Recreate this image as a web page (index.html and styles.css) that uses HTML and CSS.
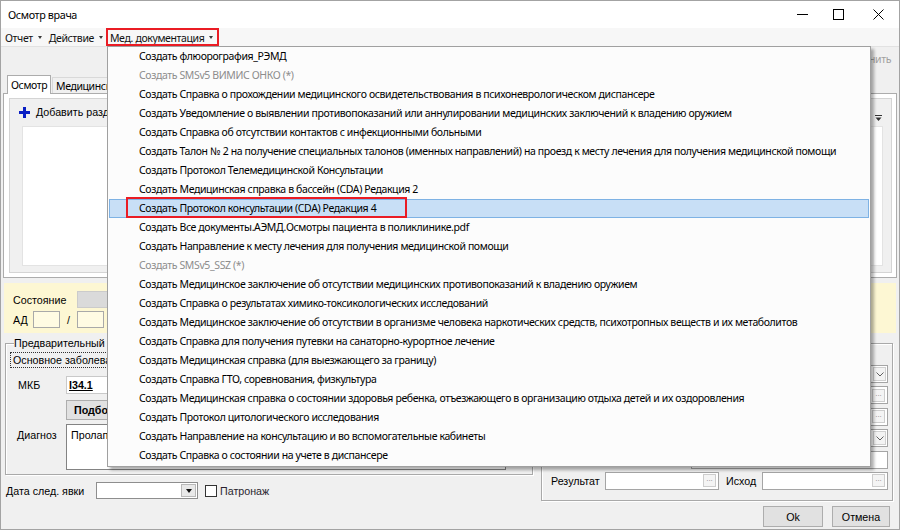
FILE: index.html
```html
<!DOCTYPE html>
<html lang="ru">
<head>
    <meta charset="UTF-8">
    <title>Осмотр врача</title>
    <link rel="stylesheet" href="styles.css">
</head>
<body>
<div class="window">
    <!-- Title bar -->
    <div class="titlebar ui">
        <span class="title">Осмотр врача</span>
        <div class="caption-buttons">
            <span class="cap-btn cap-min"><svg width="11" height="11" viewBox="0 0 11 11"><path d="M0 5.5h11" stroke="#000"/></svg></span>
            <span class="cap-btn cap-max"><svg width="11" height="11" viewBox="0 0 11 11"><rect x="0.5" y="0.5" width="10" height="10" fill="none" stroke="#000"/></svg></span>
            <span class="cap-btn cap-close"><svg width="11" height="11" viewBox="0 0 11 11"><path d="M0.5 0.5l10 10M10.5 0.5l-10 10" stroke="#000"/></svg></span>
        </div>
    </div>

    <!-- Menu bar -->
    <div class="menubar ui">
        <span class="menu-item">Отчет<i class="caret"></i></span>
        <span class="menu-item">Действие<i class="caret"></i></span>
        <span class="menu-item active">Мед. документация<i class="caret"></i></span>
    </div>

    <!-- Tool strip -->
    <div class="toolbar ui">
        <span class="tool-btn disabled">Сохранить</span>
    </div>

    <!-- Tabs -->
    <div class="tabs ui">
        <span class="tab active">Осмотр</span>
        <span class="tab">Медицинские</span>
    </div>
    <div class="tabpanel">
        <div class="page">
            <div class="page-toolbar">
                <span class="add-btn">
                    <svg width="11" height="11" viewBox="0 0 11 11"><path d="M4 0h3v4h4v3H7v4H4V7H0V4h4z" fill="#0a1fc4"/></svg>
                    Добавить раздел
                </span>
                <span class="overflow-btn"><svg width="7" height="8" viewBox="0 0 7 8"><path d="M0 1.5h7" stroke="#333"/><path d="M0.5 3.5h6l-3 3.5z" fill="#333"/></svg></span>
            </div>
            <div class="list">
                <div class="list-body"></div>
                <div class="vscroll">
                    <svg width="9" height="5" viewBox="0 0 9 5"><path d="M0.5 4.5l4-4 4 4" fill="none" stroke="#a6a6a6"/></svg>
                    <svg width="9" height="5" viewBox="0 0 9 5"><path d="M0.5 0.5l4 4 4-4" fill="none" stroke="#a6a6a6"/></svg>
                </div>
            </div>
        </div>
    </div>

    <!-- Patient state -->
    <div class="state-panel">
        <div class="state-row">
            <span class="state-label">Состояние</span>
            <span class="state-box"></span>
        </div>
        <div class="state-row">
            <span class="state-label short">АД</span>
            <span class="ad-input"></span>
            <span class="slash">/</span>
            <span class="ad-input"></span>
        </div>
    </div>

    <div class="lower">
        <div class="left-col">
            <div class="group diag">
                <div class="group-title">Предварительный диагноз</div>
                <div class="subtabs">
                    <span class="subtab">Основное заболевание</span>
                </div>
                <div class="form-row mkb-row">
                    <span class="form-label">МКБ</span>
                    <span class="input mkb"><u>I34.1</u></span>
                </div>
                <div class="form-row">
                    <span class="form-label"></span>
                    <span class="btn pick">Подбор</span>
                </div>
                <div class="form-row diag-row">
                    <span class="form-label">Диагноз</span>
                    <div class="textarea">Пролапс</div>
                </div>
            </div>
            <div class="date-row">
                <span class="date-label">Дата след. явки</span>
                <span class="combo date-combo"><span class="drop-btn"><i class="tri"></i></span></span>
                <span class="checkbox"></span>
                <span class="check-label">Патронаж</span>
            </div>
        </div>

        <div class="right-col">
            <div class="group extra">
                <div class="field-row">
                    <span class="field-label"></span>
                    <span class="input combo-box"><span class="chev-btn"><svg width="8" height="5" viewBox="0 0 8 5"><path d="M0.5 0.5l3.5 3.5 3.5-3.5" fill="none" stroke="#606060"/></svg></span></span>
                </div>
                <div class="field-row">
                    <span class="field-label"></span>
                    <span class="input"><span class="dots">...</span></span>
                </div>
                <div class="field-row">
                    <span class="field-label"></span>
                    <span class="input"><span class="dots">...</span></span>
                </div>
                <div class="field-row">
                    <span class="field-label"></span>
                    <span class="input combo-box"><span class="chev-btn"><svg width="8" height="5" viewBox="0 0 8 5"><path d="M0.5 0.5l3.5 3.5 3.5-3.5" fill="none" stroke="#606060"/></svg></span></span>
                </div>
                <div class="field-row">
                    <span class="field-label"></span>
                    <span class="input"></span>
                </div>
                <div class="field-row">
                    <span class="field-label result">Результат</span>
                    <span class="input result-input"><span class="dots">...</span></span>
                    <span class="field-label outcome">Исход</span>
                    <span class="input"><span class="dots">...</span></span>
                </div>
            </div>
        </div>
    </div>

    <div class="buttons">
        <span class="btn ok">Ok</span>
        <span class="btn cancel">Отмена</span>
    </div>

    <!-- Opened drop-down of "Мед. документация" -->
    <div class="dropdown ui">
        <div class="dd-item">Создать флюорография_РЭМД</div>
        <div class="dd-item disabled">Создать SMSv5 ВИМИС ОНКО (*)</div>
        <div class="dd-item">Создать Справка о прохождении медицинского освидетельствования в психоневрологическом диспансере</div>
        <div class="dd-item">Создать Уведомление о выявлении противопоказаний или аннулировании медицинских заключений к владению оружием</div>
        <div class="dd-item">Создать Справка об отсутствии контактов с инфекционными больными</div>
        <div class="dd-item">Создать Талон № 2 на получение специальных талонов (именных направлений) на проезд к месту лечения для получения медицинской помощи</div>
        <div class="dd-item">Создать Протокол Телемедицинской Консультации</div>
        <div class="dd-item">Создать Медицинская справка в бассейн (CDA) Редакция 2</div>
        <div class="dd-item selected">Создать Протокол консультации (CDA) Редакция 4<span class="mark"></span></div>
        <div class="dd-item">Создать Все документы.АЭМД.Осмотры пациента в поликлинике.pdf</div>
        <div class="dd-item">Создать Направление к месту лечения для получения медицинской помощи</div>
        <div class="dd-item disabled">Создать SMSv5_SSZ (*)</div>
        <div class="dd-item">Создать Медицинское заключение об отсутствии медицинских противопоказаний к владению оружием</div>
        <div class="dd-item">Создать Справка о результатах химико-токсикологических исследований</div>
        <div class="dd-item">Создать Медицинское заключение об отсутствии в организме человека наркотических средств, психотропных веществ и их метаболитов</div>
        <div class="dd-item">Создать Справка для получения путевки на санаторно-курортное лечение</div>
        <div class="dd-item">Создать Медицинская справка (для выезжающего за границу)</div>
        <div class="dd-item">Создать Справка ГТО, соревнования, физкультура</div>
        <div class="dd-item">Создать Медицинская справка о состоянии здоровья ребенка, отъезжающего в организацию отдыха детей и их оздоровления</div>
        <div class="dd-item">Создать Протокол цитологического исследования</div>
        <div class="dd-item">Создать Направление на консультацию и во вспомогательные кабинеты</div>
        <div class="dd-item">Создать Справка о состоянии на учете в диспансере</div>
    </div>
</div>
</body>
</html>
```
FILE: styles.css
```css
* {
    margin: 0;
    padding: 0;
    box-sizing: border-box;
}

body {
    width: 900px;
    height: 530px;
    overflow: hidden;
    background: #f0f0f0;
}

.window {
    position: relative;
    width: 900px;
    height: 530px;
    border: 1px solid #a3a3a3;
    background: #f0f0f0;
    display: flex;
    flex-direction: column;
    font-family: "Liberation Sans", Arial, sans-serif;
    font-size: 10.7px;
    color: #000;
    overflow: hidden;
}

/* Segoe UI look-alike */
.ui {
    font-family: "Noto Sans", sans-serif;
    font-size: 10.5px;
    letter-spacing: -0.38px;
}

/* Title bar */
.titlebar {
    height: 27px;
    flex: none;
    background: #fff;
    display: flex;
    align-items: center;
    justify-content: space-between;
}

.title {
    padding-left: 7px;
    font-size: 10.8px;
    color: #000;
}

.caption-buttons {
    display: flex;
    height: 100%;
}

.cap-btn {
    display: flex;
    align-items: center;
    justify-content: center;
    height: 100%;
}

.cap-min { width: 34px; }
.cap-max { width: 38px; }
.cap-close { width: 42px; }

/* Menu bar */
.menubar {
    height: 19px;
    flex: none;
    background: #f7f7f7;
    border-bottom: 1px solid #e2e2e2;
    display: flex;
    align-items: stretch;
}

.menu-item {
    display: flex;
    align-items: center;
    padding: 1px 3px 0 4px;
    color: #111;
}

.menu-item.active {
    padding-right: 6px;
    outline: 2px solid #ea1c24;
    outline-offset: -2px;
}

.caret {
    width: 0;
    height: 0;
    margin-left: 5px;
    border-left: 2.5px solid transparent;
    border-right: 2.5px solid transparent;
    border-top: 3px solid #3a3a3a;
}

/* Tool strip */
.toolbar {
    height: 23px;
    flex: none;
    display: flex;
    align-items: center;
    justify-content: flex-end;
    padding-right: 8px;
}

.tool-btn.disabled {
    color: #a0a0a0;
}

/* Tabs */
.tabs {
    height: 19px;
    margin-top: 4px;
    flex: none;
    display: flex;
    align-items: flex-end;
    padding-left: 6px;
}

.tab {
    height: 16px;
    padding: 0 3px;
    border: 1px solid #d9d9d9;
    border-bottom: none;
    background: #f0f0f0;
    display: flex;
    align-items: center;
    margin-left: 1px;
    width: 120px;
    white-space: nowrap;
}

.tab.active {
    height: 19px;
    width: 44px;
    margin-left: 0;
    background: #fff;
    border-color: #acacac;
    position: relative;
    z-index: 1;
    margin-bottom: -1px;
    padding-left: 3px;
}

.tabpanel {
    height: 185px;
    flex: none;
    margin: 0 2px;
    border: 1px solid #acacac;
    background: #fff;
    padding: 4px 4px 4px 5px;
}

.page {
    height: 100%;
    background: #f0f0f0;
    border: 1px solid #d4d4d4;
    padding: 3px 8px 0 12px;
}

.page-toolbar {
    height: 20px;
    display: flex;
    align-items: center;
    justify-content: space-between;
    margin-left: -3px;
}

.add-btn {
    display: flex;
    align-items: center;
    gap: 6px;
}

.overflow-btn {
    align-self: flex-end;
    margin-right: 1px;
    display: flex;
}

.list {
    height: 140px;
    margin-top: 4px;
    background: #fff;
    border: 1px solid #e3e3e3;
    display: flex;
}

.list-body {
    flex: 1;
}

.vscroll {
    width: 17px;
    background: #f3f3f3;
    display: flex;
    flex-direction: column;
    justify-content: space-between;
    align-items: center;
    padding: 15px 0 14px;
    margin-right: 8px;
}

/* Yellow state panel */
.state-panel {
    height: 50px;
    flex: none;
    margin: 5px 3px 0;
    background: #fdf7d3;
    padding: 8px 9px 0;
    display: flex;
    flex-direction: column;
    gap: 3px;
}

.state-row {
    display: flex;
    align-items: center;
    height: 17px;
}

.state-label {
    width: 64px;
}

.state-label.short {
    width: 20px;
}

.state-box {
    width: 260px;
    height: 17px;
    background: #dadada;
    border: 1px solid #cbcbcb;
}

.ad-input {
    width: 27px;
    height: 17px;
    background: #fffbe3;
    border: 1px solid #a9a9a9;
}

.slash {
    width: 17px;
    text-align: center;
}

/* Lower area */
.lower {
    flex: none;
    display: flex;
    gap: 8px;
    margin-top: 10px;
    padding: 0 6px 0 4px;
}

.left-col {
    width: 528px;
    display: flex;
    flex-direction: column;
}

.right-col {
    flex: 1;
}

.group {
    border: 1px solid #a9a9a9;
    box-shadow: inset 1px 1px 0 #fff, 1px 1px 0 #fff;
}

.group.diag {
    height: 132px;
    padding: 0 4px;
}

.group-title {
    margin: -7px 0 0 4px;
    height: 12px;
    line-height: 12px;
    width: fit-content;
    padding: 0 1px 0 0;
    background: #f0f0f0;
}

.subtabs {
    display: flex;
    margin-top: 3px;
    height: 16px;
}

.subtab {
    border: 1px dotted #333;
    padding: 0 2px;
    display: flex;
    align-items: center;
    background: #f0f0f0;
}

.form-row {
    display: flex;
    align-items: center;
    margin-top: 6px;
}

.mkb-row {
    margin-top: 8px;
}

.diag-row {
    align-items: flex-start;
    margin-top: 4px;
}

.form-label {
    width: 56px;
    padding-left: 8px;
    flex: none;
}

.diag-row .form-label {
    padding-top: 5px;
    padding-left: 7px;
}

.input {
    height: 18px;
    background: #fff;
    border: 1px solid #a5a5a5;
    display: flex;
    align-items: center;
    justify-content: flex-end;
    padding: 0 2px;
    flex: 1;
}

.input.mkb {
    justify-content: flex-start;
    font-weight: bold;
    flex: none;
    width: 300px;
    padding-left: 2px;
    border-color: #c9c9c9;
}

.btn {
    background: #e1e1e1;
    border: 1px solid #adadad;
    display: flex;
    align-items: center;
    justify-content: center;
}

.btn.pick {
    height: 20px;
    width: 300px;
    justify-content: flex-start;
    padding-left: 7px;
    font-weight: bold;
}

.textarea {
    width: 440px;
    height: 46px;
    background: #fff;
    border: 1px solid #838383;
    padding: 4px 4px;
}

/* Next visit date */
.date-row {
    margin-top: 7px;
    height: 17px;
    display: flex;
    align-items: center;
    padding-left: 1px;
}

.date-label {
    width: 90px;
}

.combo.date-combo {
    width: 102px;
    height: 17px;
    background: #fff;
    border: 1px solid #8e8e8e;
    display: flex;
    justify-content: flex-end;
    padding: 1px;
}

.drop-btn {
    width: 15px;
    background: #e8e8e8;
    border: 1px solid #b8b8b8;
    display: flex;
    align-items: center;
    justify-content: center;
}

.tri {
    width: 0;
    height: 0;
    border-left: 3.5px solid transparent;
    border-right: 3.5px solid transparent;
    border-top: 4px solid #111;
}

.checkbox {
    width: 12px;
    height: 12px;
    margin-left: 7px;
    background: #fff;
    border: 1px solid #333;
}

.check-label {
    margin-left: 3px;
    color: #2a1f2e;
}

/* Right group */
.group.extra {
    height: 158px;
    padding: 21px 4px 0 9px;
    display: flex;
    flex-direction: column;
    gap: 3.4px;
}

.field-row {
    height: 18px;
    display: flex;
    align-items: center;
}

.field-label {
    width: 140px;
    flex: none;
}

.field-label.result {
    width: 54px;
}

.field-label.outcome {
    width: 36px;
    margin-left: 7px;
}

.input.result-input {
    flex: none;
    width: 114px;
}

.dots {
    width: 13px;
    height: 13px;
    background: #f4f4f4;
    border: 1px solid #cdcdcd;
    color: #8a8a8a;
    font-size: 8px;
    line-height: 8px;
    text-align: center;
}

.combo-box {
    padding: 1px;
}

.chev-btn {
    width: 13px;
    height: 100%;
    background: #f3f3f3;
    border: 1px solid #d0d0d0;
    display: flex;
    align-items: center;
    justify-content: center;
}

/* Dialog buttons */
.buttons {
    margin-top: 5px;
    display: flex;
    justify-content: flex-end;
    gap: 9px;
    padding-right: 9px;
}

.btn.ok {
    width: 60px;
    height: 21px;
}

.btn.cancel {
    width: 58px;
    height: 21px;
}

/* Drop-down menu */
.dropdown {
    position: absolute;
    left: 106px;
    top: 45px;
    width: 764px;
    height: 421px;
    background: #fcfcfc;
    border: 1px solid #a0a0a0;
    box-shadow: 3px 3px 3px rgba(0, 0, 0, 0.32);
    padding: 0 1px 1px;
    z-index: 10;
}

.dd-item {
    height: 19px;
    line-height: 17px;
    padding-left: 29px;
    border: 1px solid transparent;
    white-space: nowrap;
    color: #000;
    position: relative;
}

.dd-item.disabled {
    color: #8d8d8d;
}

.dd-item.selected {
    background: #c8dff6;
    border-color: #7eb2e4;
}

.mark {
    position: absolute;
    left: 16px;
    top: -3px;
    width: 281px;
    height: 21px;
    border: 2px solid #ea1c24;
}
```
